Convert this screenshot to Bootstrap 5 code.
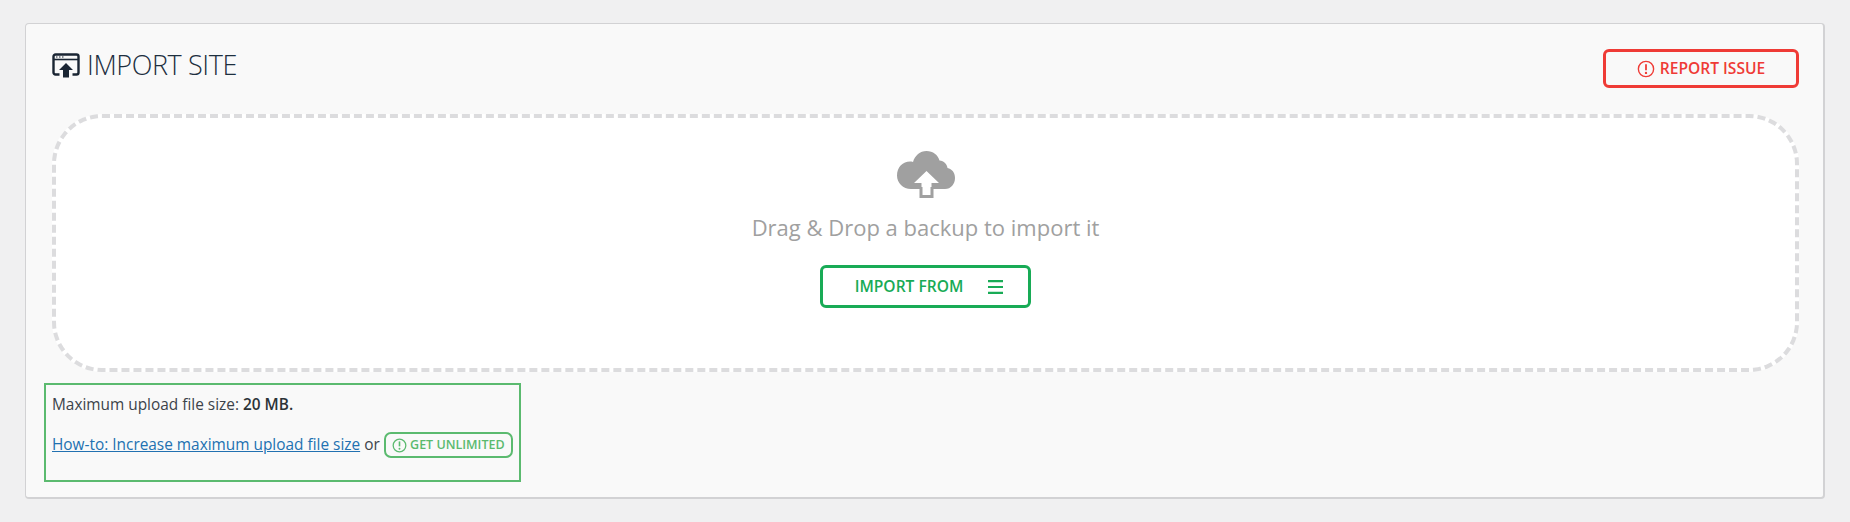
<!DOCTYPE html>
<html lang="en">
<head>
<meta charset="utf-8">
<title>Import Site</title>
<link rel="stylesheet" href="https://cdn.jsdelivr.net/npm/bootstrap@5.3.0/dist/css/bootstrap.min.css">
<style>
html,body{height:100%}
body{background:#f0f0f1;font-family:"Open Sans","Noto Sans",sans-serif;font-size:14px;color:#3c434a;overflow:hidden}
.page-wrap{padding:23px 25px 0 25px}
.import-card{height:476px;background:#f9f9f9;border:1px solid #d2d2d4;border-width:1px 2px 2px 1px;border-radius:4px;padding:24px 24px 0 26px}
.title-row{height:66px}
.site-title{font-family:"Open Sans",sans-serif;font-weight:300;font-size:27px;line-height:34px;color:#1d2f3f;margin:0;letter-spacing:-.4px;gap:7px}
.report-btn{width:196px;height:39px;margin-top:1px;border:3px solid #ef3b36;border-radius:6px;color:#ef3b36;font-size:15.6px;font-weight:600;background:transparent;padding:0;gap:5px}
.report-btn:hover{color:#ef3b36;border-color:#ef3b36}
.drop-zone{height:258px;background:#fff;border:4px dashed #dcdcde;border-radius:50px;padding-top:33px}
.drop-text{font-size:22px;line-height:30px;color:#a0a0a0;margin:13px 0 23px}
.from-btn{width:211px;height:43px;border:3px solid #18ab56;border-radius:6px;color:#18ab56;font-size:15.6px;font-weight:600;background:transparent;padding:0 0 0 7px;gap:25px}
.from-btn:hover{color:#18ab56;border-color:#18ab56}
.limit-box{width:477px;height:99px;margin:11px 0 0 -8px;border:2px solid #5bba6f;padding:8px 6px}
.limit-line{font-size:15.4px;line-height:24px;margin:0;white-space:nowrap}
.limit-line strong{font-weight:600;color:#2c3338}
.limit-line a{color:#2271b1}
.limit-link-line{margin-top:15px;gap:4px}
.unlimited-tag{height:26px;width:130px;border:2px solid #5bba6f;border-radius:7px;color:#5bba6f;font-size:12.5px;font-weight:600;text-decoration:none;gap:3px}
.limit-line a.unlimited-tag{color:#5bba6f}
</style>
</head>
<body>
<div class="page-wrap">
  <div class="card import-card">
    <div class="title-row d-flex justify-content-between align-items-start">
      <h1 class="site-title d-flex align-items-center">
        <svg width="28" height="25" viewBox="0 0 28 25" fill="none" aria-hidden="true">
          <path d="M7.500 21.500H3.500a2 2 0 0 1-2-2V3.500a2 2 0 0 1 2-2h21a2 2 0 0 1 2 2v16a2 2 0 0 1-2 2h-4" stroke="#1a2533" stroke-width="2.400"/>
          <path d="M2 6.500h24" stroke="#1a2533" stroke-width="1.600"/>
          <path d="M4 4h1.500M7 4h1.500M10 4h1.500" stroke="#1a2533" stroke-width="1"/>
          <path d="M14 10l7 7h-4v7.500h-6V17H7z" fill="#1a2533"/>
        </svg>
        IMPORT SITE
      </h1>
      <button type="button" class="btn report-btn d-flex align-items-center justify-content-center">
        <svg width="18" height="18" viewBox="0 0 17 17" fill="none" aria-hidden="true"><circle cx="8.500" cy="8.500" r="7.200" stroke="#ef3b36" stroke-width="1.300"/><path d="M8.500 4v5.600" stroke="#ef3b36" stroke-width="1.700"/><circle cx="8.500" cy="12.200" r="1.100" fill="#ef3b36"/></svg>
        REPORT ISSUE
      </button>
    </div>
    <div class="drop-zone d-flex flex-column align-items-center">
      <svg width="58" height="48" viewBox="0 0 58 48" aria-hidden="true">
        <path d="M14 38C6 38 0 32 0 24.500 0 16 6 10.500 13 10.500c1 0 2 .1 3 .4C18 4.500 23 0 29.500 0 36 0 41 4 42.500 9.500 47 10 50 13 50.500 17c4.500 1 7.500 4.500 7.500 10 0 6-4 11-10 11z" fill="#a0a0a0"/>
        <path d="M24 32v13.500h11V32" fill="#fff" stroke="#a0a0a0" stroke-width="3"/>
        <path d="M29.500 20 42 32h-7.500v4h-10v-4H17z" fill="#fff"/>
      </svg>
      <p class="drop-text">Drag &amp; Drop a backup to import it</p>
      <button type="button" class="btn from-btn d-flex align-items-center justify-content-center">
        IMPORT FROM
        <svg width="15" height="14" viewBox="0 0 15 14" aria-hidden="true"><path d="M0 1.200h15M0 7h15M0 12.800h15" stroke="#18ab56" stroke-width="2.200"/></svg>
      </button>
    </div>
    <div class="limit-box">
      <p class="limit-line">Maximum upload file size: <strong>20 MB.</strong></p>
      <p class="limit-line limit-link-line d-flex align-items-center">
        <a href="#">How-to: Increase maximum upload file size</a>
        <span>or</span>
        <a href="#" class="unlimited-tag d-inline-flex align-items-center justify-content-center">
          <svg width="15" height="15" viewBox="0 0 14 14" fill="none" aria-hidden="true"><circle cx="7" cy="7" r="5.900" stroke="#5bba6f" stroke-width="1.200"/><path d="M7 3.200v4.600" stroke="#5bba6f" stroke-width="1.500"/><circle cx="7" cy="10" r=".9" fill="#5bba6f"/></svg>
          GET UNLIMITED
        </a>
      </p>
    </div>
  </div>
</div>
<script src="https://cdn.jsdelivr.net/npm/bootstrap@5.3.0/dist/js/bootstrap.bundle.min.js"></script>
</body>
</html>
